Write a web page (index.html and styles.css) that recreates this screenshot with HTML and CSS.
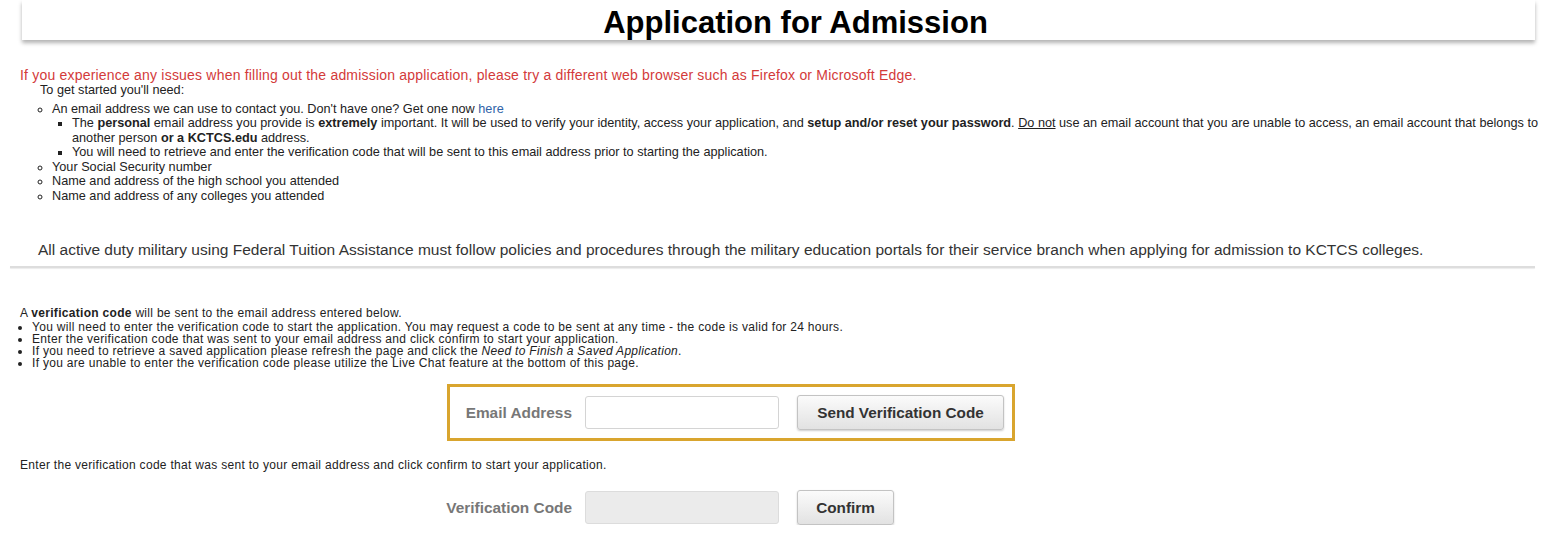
FILE: index.html
```html
<!DOCTYPE html>
<html lang="en">
  <head>
    <meta charset="UTF-8">
    <meta name="viewport" content="width=device-width, initial-scale=1.0">
    <title>Application for Admission</title>
    <link rel="stylesheet" href="styles.css">
  </head>
  <body>
    <header class="page-header">
      <h1>Application for Admission</h1>
    </header>
    <main class="content">
      <p class="notice">If you experience any issues when filling out the admission application, please try a different web browser such as Firefox or Microsoft Edge.</p>
      <div class="requirements">
        <p class="intro">To get started you'll need:</p>
        <ul class="circle-list">
          <li>An email address we can use to contact you. Don't have one? Get one now <a href="#">here</a>
            <ul class="square-list">
              <li>The <b>personal</b> email address you provide is <b>extremely</b> important. It will be used to verify your identity, access your application, and <b>setup and/or reset your password</b>. <u>Do not</u> use an email account that you are unable to access, an email account that belongs to another person <b>or a KCTCS.edu</b> address.</li>
              <li>You will need to retrieve and enter the verification code that will be sent to this email address prior to starting the application.</li>
            </ul>
          </li>
          <li>Your Social Security number</li>
          <li>Name and address of the high school you attended</li>
          <li>Name and address of any colleges you attended</li>
        </ul>
      </div>
      <p class="military">All active duty military using Federal Tuition Assistance must follow policies and procedures through the military education portals for their service branch when applying for admission to KCTCS colleges.</p>
      <hr class="divider">
      <section class="verify">
        <p>A <b>verification code</b> will be sent to the email address entered below.</p>
        <ul class="disc-list">
          <li>You will need to enter the verification code to start the application. You may request a code to be sent at any time - the code is valid for 24 hours.</li>
          <li>Enter the verification code that was sent to your email address and click confirm to start your application.</li>
          <li>If you need to retrieve a saved application please refresh the page and click the <i>Need to Finish a Saved Application</i>.</li>
          <li>If you are unable to enter the verification code please utilize the Live Chat feature at the bottom of this page.</li>
        </ul>
        <div class="email-box">
          <div class="form-row">
            <label for="email">Email Address</label>
            <input type="text" id="email">
            <button type="button" class="btn">Send Verification Code</button>
          </div>
        </div>
        <p class="confirm-note">Enter the verification code that was sent to your email address and click confirm to start your application.</p>
        <div class="form-row code-row">
          <label for="code">Verification Code</label>
          <input type="text" id="code" disabled>
          <button type="button" class="btn btn-small">Confirm</button>
        </div>
      </section>
    </main>
  </body>
</html>
```

FILE: styles.css
```css
:root {
  --text-color: #222;
  --label-color: #777;
  --gold: #d9a52e;
  --red: #d33a3a;
  --link: #2f63a8;
}

* {
  box-sizing: border-box;
}

body {
  margin: 0;
  font-family: 'Liberation Sans', Arial, sans-serif;
  color: var(--text-color);
  background: #fff;
}

.page-header {
  margin: 0 25px 0 22px;
  height: 40px;
  background: #fff;
  box-shadow: 0 3px 4px rgba(0, 0, 0, 0.3);
}

.page-header h1 {
  margin: 0;
  padding: 3px 0 0 34px;
  text-align: center;
  font-size: 31px;
  line-height: 40px;
  color: #000;
}

.content {
  padding: 0 15px 0 20px;
}

.notice {
  margin: 28px 0 0;
  font-size: 14px;
  letter-spacing: 0.2px;
  line-height: 15px;
  color: var(--red);
}

.requirements {
  margin-left: 20px;
  font-size: 12.7px;
  line-height: 14.5px;
}

.requirements p {
  margin: 0;
}

.circle-list {
  margin: 4px 0 0;
  padding-left: 12px;
  list-style: circle;
}

.square-list {
  margin: 0;
  padding-left: 20px;
  list-style: square;
}

.requirements a {
  color: var(--link);
  text-decoration: none;
}

.military {
  margin: 38px 0 0 18px;
  font-size: 15.5px;
  line-height: 17px;
  color: #333;
}

.divider {
  margin: 8px 10px 0 -10px;
  border: 0;
  height: 2px;
  background: #ddd;
  box-shadow: 0 1px 1px rgba(0, 0, 0, 0.08);
}

.verify {
  font-size: 12px;
  letter-spacing: 0.3px;
  line-height: 12px;
}

.verify p {
  margin: 39px 0 0;
}

.disc-list {
  margin: 2px 0 0;
  padding-left: 12px;
}

.email-box {
  margin: 15px 0 0 427px;
  width: 568px;
  border: 3px solid var(--gold);
  padding: 8px 0 8px;
  letter-spacing: 0;
}

.form-row {
  display: flex;
  align-items: center;
  letter-spacing: 0;
}

.form-row label {
  display: flex;
  justify-content: flex-end;
  flex: 0 0 122px;
  min-width: 0;
  margin-right: 13px;
  white-space: nowrap;
  font-size: 15.4px;
  font-weight: bold;
  color: var(--label-color);
}

.form-row input {
  width: 194px;
  height: 33px;
  border: 1px solid #d4d4d4;
  border-radius: 3px;
  background: #fff;
  font: inherit;
}

.form-row input:disabled {
  background: #ebebeb;
  border-color: #dcdcdc;
}

.btn {
  margin-left: 18px;
  width: 207px;
  height: 35px;
  border: 1px solid #c3c3c3;
  border-radius: 3px;
  background: linear-gradient(#fbfbfb, #e2e2e2);
  box-shadow: 0 1px 2px rgba(0, 0, 0, 0.2);
  font-family: 'Liberation Sans', Arial, sans-serif;
  font-size: 15.3px;
  font-weight: bold;
  color: #333;
}

.btn-small {
  width: 97px;
}

.verify .confirm-note {
  margin-top: 18px;
}

.code-row {
  margin: 19px 0 0 430px;
}
```
